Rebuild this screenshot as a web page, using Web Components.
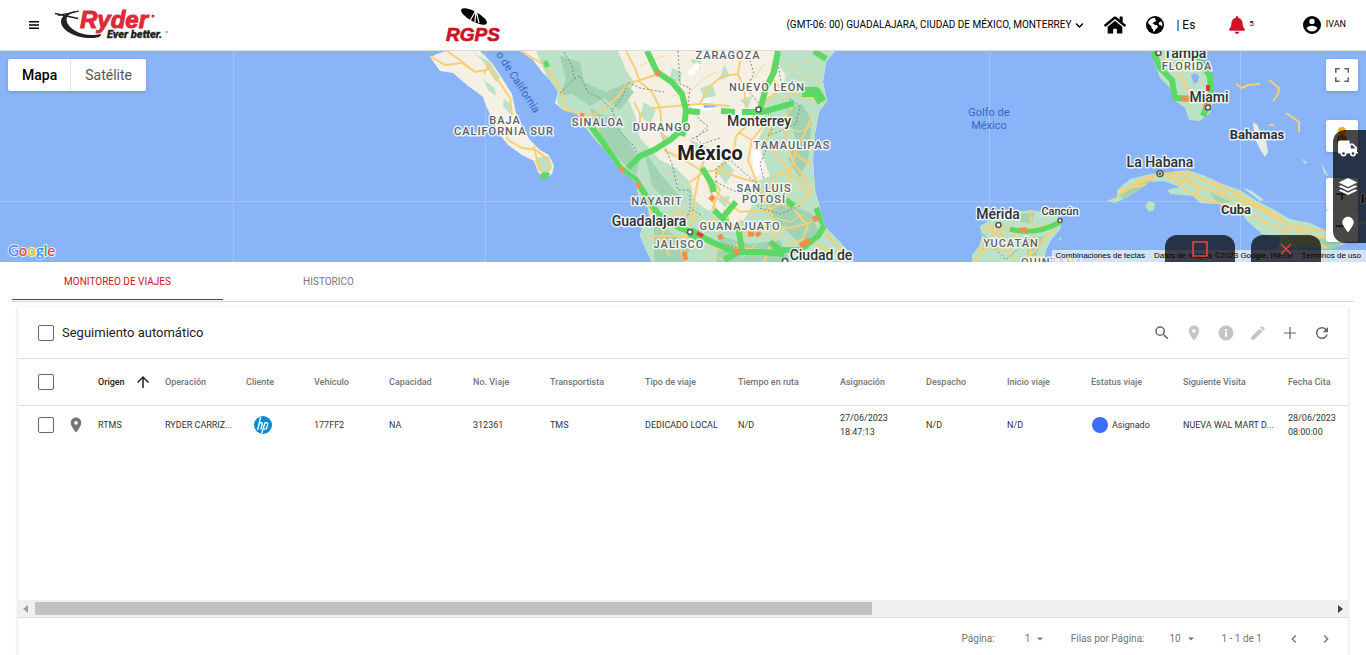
<!DOCTYPE html>
<html lang="es">
<head>
<meta charset="utf-8">
<meta name="viewport" content="width=device-width, initial-scale=1">
<title>RGPS - Monitoreo de viajes</title>
<style>
  html, body { margin: 0; height: 100%; }
  body { font-family: Roboto, "Liberation Sans", sans-serif; color: #222; background: #fff; }
</style>
</head>
<body>
<rgps-app></rgps-app>

<script>
const define = (name, html, setup) => {
  const tpl = document.createElement('template');
  tpl.innerHTML = html;
  customElements.define(name, class extends HTMLElement {
    constructor() {
      super();
      this.attachShadow({ mode: 'open' }).append(tpl.content.cloneNode(true));
    }
    connectedCallback() { if (setup) setup(this, this.shadowRoot); }
  });
};

/* ---------- icons ---------- */
const ICONS = {
  menu: ['0 0 20 16', '<path d="M0 0h20v3H0zM0 6.500h20v3H0zM0 13h20v3H0z"/>'],
  chevron: ['0 0 448 512', '<path d="M207 381 13 187c-10-10-10-25 0-34l22-22c10-10 25-10 34 0l155 154 155-154c9-10 24-10 34 0l22 22c10 9 10 24 0 34L241 381c-9 9-25 9-34 0z"/>'],
  home: ['0 0 576 512', '<path d="M280.4 148.3 96 300.1V464a16 16 0 0 0 16 16l112-.3a16 16 0 0 0 16-16V368a16 16 0 0 1 16-16h64a16 16 0 0 1 16 16v95.600a16 16 0 0 0 16 16.100l112 .3a16 16 0 0 0 16-16V300L295.700 148.300a12.200 12.200 0 0 0-15.300 0zM571.600 251.500 488 182.600V44a12 12 0 0 0-12-12h-56a12 12 0 0 0-12 12v72.600L318.500 43a48 48 0 0 0-61 0L4.300 251.500a12 12 0 0 0-1.600 16.900l25.500 31A12 12 0 0 0 45.200 301L280.400 107.300a12.200 12.200 0 0 1 15.300 0L530.900 301a12 12 0 0 0 16.900-1.600l25.500-31a12 12 0 0 0-1.700-16.900z"/>'],
  globe: ['0 0 20 20', '<circle cx="10" cy="10" r="10"/><path fill="#fff" d="M2.200 7.600C3.300 4.300 6 2.300 9.200 2l1.300 1-.4 1.300 1.600.3-1.200 1.500-1.900.5-.3 1.500-1.500.5 1.600.4 1.600 1 2.200.4 1.200 1.200-1.500 2.400-1.300 1-.9 2-1.400.6-.5-2.600-1.900-1.800.2-1.900-1.900-1.300zM14.300 3.500l2.600 2.700-2 .5-1 1.500.7 1.400 2.100.6 1 1.600.5-1.300-.1-2.300-1.100-2z"/>'],
  bell: ['0 0 448 512', '<path d="M224 512c35 0 64-29 64-64H160c0 35 29 64 64 64zm215-150c-19-21-55-52-55-154 0-78-54-140-128-155V32a32 32 0 1 0-64 0v21C118 68 64 130 64 208c0 102-36 133-55 154-6 6-9 14-9 22 0 16 13 32 32 32h384c19 0 32-16 32-32 0-8-3-16-9-22z"/>'],
  user: ['2 2 20 20', '<path d="M12 2a10 10 0 1 0 0 20 10 10 0 0 0 0-20zm0 3a3 3 0 1 1 0 6 3 3 0 0 1 0-6zm0 14.200a7.200 7.200 0 0 1-6-3.220c.03-1.990 4-3.080 6-3.080s5.970 1.090 6 3.080a7.200 7.200 0 0 1-6 3.220z"/>'],
  pin: ['0 0 24 24', '<path d="M12 2C8.130 2 5 5.130 5 9c0 5.250 7 13 7 13s7-7.750 7-13c0-3.870-3.130-7-7-7zm0 9.500a2.500 2.500 0 1 1 0-5 2.500 2.500 0 0 1 0 5z"/>'],
  drop: ['0 0 24 24', '<path d="M12 1C7.600 1 4 4.500 4 8.900 4 14 12 23 12 23s8-9 8-14.100C20 4.500 16.400 1 12 1z"/>'],
  search: ['0 0 24 24', '<path d="M15.500 14h-.79l-.28-.27A6.470 6.470 0 0 0 16 9.500 6.500 6.500 0 1 0 9.500 16c1.610 0 3.090-.59 4.230-1.570l.27.28v.79l5 4.990L20.490 19l-4.990-5zm-6 0a4.500 4.500 0 1 1 0-9 4.500 4.500 0 0 1 0 9z"/>'],
  info: ['0 0 24 24', '<path d="M12 2a10 10 0 1 0 0 20 10 10 0 0 0 0-20zm1.500 15h-3v-6h3zm0-7.500h-3v-3h3z"/>'],
  edit: ['0 0 24 24', '<path d="M3 17.250V21h3.750L17.810 9.940l-3.750-3.750zM20.710 7.040a1 1 0 0 0 0-1.410l-2.340-2.340a1 1 0 0 0-1.410 0l-1.830 1.830 3.750 3.750z"/>'],
  add: ['0 0 24 24', '<path d="M20 12.800h-7.200V20h-1.600v-7.200H4v-1.600h7.200V4h1.600v7.200H20z"/>'],
  refresh: ['0 0 24 24', '<path d="M17.650 6.350A8 8 0 1 0 19.730 14h-2.080A6 6 0 1 1 12 6c1.660 0 3.140.69 4.220 1.780L13 11h7V4z"/>'],
  arrow: ['0 0 24 24', '<path d="m4 12 1.410 1.410L11 7.830V20h2V7.830l5.580 5.590L20 12l-8-8z"/>'],
  caret: ['0 0 10 5', '<path d="M0 0h10L5 5z"/>'],
  left: ['0 0 24 24', '<path d="M15.410 7.410 14 6l-6 6 6 6 1.410-1.410L10.830 12z"/>'],
  right: ['0 0 24 24', '<path d="M10 6 8.590 7.410 13.170 12l-4.580 4.590L10 18l6-6z"/>'],
  truck: ['0 0 20 16', '<path d="M0 2c0-1 .7-2 2-2h9.500v3H15l4 4v4.500h1V13h-2a3 3 0 0 1-6 0H8.500a3 3 0 0 1-6 0H1.300C.4 13 0 12.500 0 12zM12.800 4.500V8h4.700L14.300 4.500z" fill-rule="evenodd"/><circle cx="5.500" cy="13" r="1.300" fill="#333"/><circle cx="15" cy="13" r="1.300" fill="#333"/>'],
  layers: ['0 0 20 18', '<path d="m10 0 10 4.700-10 4.700L0 4.700zM2.500 7.700 10 11.200l7.500-3.500L20 9l-10 4.700L0 9zM2.500 12 10 15.500l7.500-3.500 2.500 1.300L10 18 0 13.300z"/>'],
  full: ['0 0 18 18', '<path d="M0 0h6v2H2v4H0zM12 0h6v6h-2V2h-4zM0 12h2v4h4v2H0zM16 12h2v6h-6v-2h4z"/>'],
  square: ['0 0 16 16', '<path d="M1 1h14v14H1z" fill="none" stroke="currentColor" stroke-width="1.600"/>'],
  cross: ['0 0 12 12', '<path d="m1 1 10 10M11 1 1 11" fill="none" stroke="currentColor" stroke-width="1.300"/>'],
  plus: ['0 0 12 12', '<path d="M0 5h12v2H0zM5 0h2v12H5z"/>'],
  minus: ['0 0 12 12', '<path d="M0 5h12v2H0z"/>'],
  pegman: ['0 0 12 18', '<circle cx="6" cy="4" r="4" fill="#f9ab00"/><path d="M1 18V11c0-2 2-3 5-3s5 1 5 3v7z" fill="#c77f10"/>'],
  hp: ['0 0 20 20', '<circle cx="10" cy="10" r="10" fill="#0a8ad0"/><path d="M7.400 1 4.300 14M3.900 15.500 6 8.200M6.600 7.500h1.500q1.400 0 1 1.500L7.500 15M12.300 7l-3.700 12.500M12.200 7.500h2q1.500 0 1.100 1.500l-1.200 4.500q-.3 1-1.500 1h-1.500" fill="none" stroke="#fff" stroke-width="1.500"/>']
};
customElements.define('ui-icon', class extends HTMLElement {
  connectedCallback() {
    if (this.shadowRoot) return;
    const [box, body] = ICONS[this.getAttribute('name')];
    this.attachShadow({ mode: 'open' }).innerHTML =
      `<style>:host{display:inline-flex;flex:none;width:16px;height:16px}svg{width:100%;height:100%;fill:currentColor}</style>
       <svg viewBox="${box}" aria-hidden="true">${body}</svg>`;
  }
});

/* ---------- tick box ---------- */
customElements.define('ui-check', class extends HTMLElement {
  connectedCallback() {
    if (this.shadowRoot) return;
    this.attachShadow({ mode: 'open' }).innerHTML = `
      <style>
        :host { display: inline-flex; vertical-align: middle; }
        label { display: flex; align-items: center; gap: 8px; font-size: 13px; line-height: 16px; color: #222; }
        input { appearance: none; margin: 0; width: 16px; height: 16px; border: 1px solid #666; border-radius: 2px; background: #fff; }
        input:checked { background: #ce1126; border-color: #ce1126; }
      </style>
      <label><input type="checkbox" aria-label="${this.getAttribute('label')}"><slot></slot></label>`;
  }
});

/* ---------- header ---------- */
define('ryder-logo', `
  <style>:host{display:block;width:114px;height:42px}svg{display:block;width:100%;height:100%;overflow:visible}</style>
  <svg viewBox="0 -6 114 42" role="img" aria-label="Ryder Ever better">
    <path d="M4 5.500C9 4 17 3.500 25 1M1 3.500 24 8.500" stroke="#222" stroke-width="1.300" fill="none"/>
    <path d="M24 .5C12 2.500 7 6 7 12c0 6 9 13.500 22 15.500 8 1.200 15 .6 17.500-1.500l.8-2C38 26 27 25 20 20 12 14.500 10 7.500 16 4z" fill="#222"/>
    <text x="26" y="18" font-family="Liberation Sans, Arial, sans-serif" font-weight="700" font-style="italic" font-size="24" fill="#dd2a38" stroke="#dd2a38" stroke-width="1">Ryder</text>
    <circle cx="99" cy="6" r="1.500" fill="#dd2a38"/>
    <text x="53" y="28" font-family="Roboto, sans-serif" font-weight="900" font-style="italic" font-size="11" fill="#222" stroke="#222" stroke-width=".3">Ever better.</text>
    <path d="M111 22h3" stroke="#777"/>
  </svg>`);

define('rgps-logo', `
  <style>:host{display:block;width:60px;height:42px}svg{display:block;width:100%;height:100%;overflow:visible}</style>
  <svg viewBox="0 -4 60 42" role="img" aria-label="RGPS">
    <ellipse cx="29" cy="8.500" rx="14.500" ry="5" transform="rotate(29 29 8.500)" fill="#000"/>
    <path d="m31 2-6 11M31 2l-1 12M31 2l3 13" stroke="#fff" stroke-width="1.200"/>
    <text x="1" y="33" font-family="Liberation Sans, Arial, sans-serif" font-weight="700" font-style="italic" font-size="19" fill="#ce1126" stroke="#ce1126" stroke-width=".7">RGPS</text>
  </svg>`);

define('app-header', `
  <style>
    :host { display: grid; grid-template-columns: 445fr 921fr; align-items: center; height: 50px; border-bottom: 1px solid #dadce0; background: #fff; color: #000; }
    .left, .right { display: flex; align-items: center; }
    .left { padding-left: 29px; gap: 15px; }
    .right { padding-right: 20px; }
    button, .link { all: unset; display: flex; align-items: center; cursor: pointer; color: inherit; }
    .menu ui-icon { width: 10px; height: 8px; }
    .zone { display: flex; align-items: center; margin-left: auto; }
    select { appearance: none; border: 0; margin: 0; padding: 0 12px 0 0; background: none; font: 10px/16px Roboto, sans-serif; color: #000; }
    .zone ui-icon { width: 9px; height: 9px; margin-left: -9px; pointer-events: none; }
    .home { margin-left: 20px; }
    .home ui-icon { width: 22px; height: 20px; }
    .lang { margin-left: 20px; gap: 12px; font-size: 12px; line-height: 16px; }
    .lang ui-icon { width: 18px; height: 18px; }
    .bell { margin-left: 34px; gap: 4px; font-size: 8px; line-height: 16px; }
    .bell ui-icon { width: 16px; height: 18px; color: #ce1126; }
    .bell span, .user span { margin-bottom: 3px; }
    .user { margin-left: 49px; gap: 5px; font-size: 9px; line-height: 16px; }
    .user ui-icon { width: 18px; height: 18px; }
  </style>
  <div class="left">
    <button class="menu" aria-label="Menú"><ui-icon name="menu"></ui-icon></button>
    <ryder-logo></ryder-logo>
  </div>
  <div class="right">
    <rgps-logo></rgps-logo>
    <label class="zone"><select aria-label="Zona horaria"><option>(GMT-06: 00) GUADALAJARA, CIUDAD DE MÉXICO, MONTERREY</option></select><ui-icon name="chevron"></ui-icon></label>
    <a class="link home" href="#inicio" aria-label="Inicio"><ui-icon name="home"></ui-icon></a>
    <button class="lang"><ui-icon name="globe"></ui-icon><span>| Es</span></button>
    <button class="bell" aria-label="Notificaciones"><ui-icon name="bell"></ui-icon><span>5</span></button>
    <button class="user"><ui-icon name="user"></ui-icon><span>IVAN</span></button>
  </div>`);

/* ---------- map ---------- */
define('map-canvas', `
  <style>
    :host { display: block; height: 100%; }
    svg { display: block; width: 100%; height: 100%; }
    text { font-family: Roboto, sans-serif; text-anchor: middle; paint-order: stroke; stroke: #fff; stroke-opacity: .8; stroke-width: 3px; stroke-linejoin: round; }
    .state { font-size: 11px; font-weight: 500; letter-spacing: 1px; fill: #5f6368; }
    .city { font-size: 14px; font-weight: 500; fill: #303236; }
    .town { font-size: 11px; font-weight: 500; fill: #3c4043; }
    .bold { font-size: 13px; font-weight: 700; }
    .country { font-size: 20px; font-weight: 700; fill: #202124; }
    .sea { font-size: 11px; fill: #2f68cc; stroke: none; }
    .logo { font: 500 15px Lato, sans-serif; text-anchor: start; stroke-width: 2px; }
    .land { fill: #f5f0e4; }
    .green { fill: #bbe2c6; }
    .dark { fill: #a1d3b2; }
    .road path { fill: none; stroke: #f8cf74; stroke-width: 2; stroke-linejoin: round; }
    .road .minor { stroke: #f6d994; stroke-width: 1; }
    .border path { fill: none; stroke: #80868b; stroke-width: 1; stroke-dasharray: 2 2; }
    .jam path { fill: none; stroke: #5cd865; stroke-width: 6; stroke-linejoin: round; }
    .jam .wide { stroke-width: 10; }
    .slow path { fill: none; stroke: #ff8a4c; stroke-width: 5; }
    .dot circle { fill: #fff; stroke: #555; stroke-width: 1.500; }
  </style>
  <svg viewBox="0 51 1366 211" preserveAspectRatio="xMidYMid slice" role="img" aria-label="Mapa de México">
    <defs>
      <clipPath id="main"><path d="M520 51 533 60 542 72 550 80 558 92 555 103 563 110 577 114 583 124 593 137 607 153 620 171 636 182 638 194 648 208 650 220 642 226 640 236 646 250 652 262H854L850 253 838 240 825 227 820 208 815 190 813 160 815 133 819 112 827 101 823 82 826 62 835 51Z"/></clipPath>
      <clipPath id="cuba"><path d="M1107 201 1117 197 1117 190 1130 179 1150 174 1170 172 1187 170 1203 175 1220 183 1240 190 1257 201 1273 209 1290 219 1310 223 1327 231 1337 234 1347 243 1330 249 1297 247 1277 250 1281 238 1262 234 1247 221 1240 210 1217 204 1200 203 1193 196 1170 194 1167 190 1180 187 1163 181 1150 182 1140 189 1128 197 1115 203Z"/></clipPath>
    </defs>
    <rect y="51" width="1366" height="211" fill="#8ab4f8"/>
    <path d="M233.500 51V262M485.500 51V262M989.500 51V262M1240.500 51V262M0 201.500H1366" stroke="#a3c4fa"/>
    <!-- Baja California -->
    <path class="land" d="M430 57 437 54 446 51H480L492 63 500 75 512 94 516 113 522 127 530 140 540 150 549 155 554 166 552 174 545 179 538 172 534 161 522 155 508 145 497 131 492 118 487 108 483 97 474 90 468 86 453 73 440 71Z"/>
    <path class="green" d="M472 52 490 62 500 78 496 82 482 60ZM484 80 495 88 496 96 488 90ZM504 98 512 106 510 114 503 106ZM536 158 549 156 552 168 546 176 538 170Z"/>
    <g class="road"><path d="M430 56 445 65 462 63 475 72 490 69 500 83 510 98 512 114 504 128 508 140 522 148 536 150 546 158 551 166 543 176 536 160M447 51 460 60 475 72M534 146 539 170M490 62 484 74"/></g>
    <path fill="#5cd865" d="m540 175 4-3 6 1-2 5-6 2z"/>
    <!-- Mainland -->
    <g clip-path="url(#main)">
      <rect class="land" x="510" y="51" width="350" height="211"/>
      <path class="green" d="M536 51H618L626 70 634 82 628 98 636 118 640 138 660 160 676 168 690 182 694 200 704 208 720 214 730 226 744 220 752 206 746 192 756 182 770 176 764 160 758 140 766 124 760 100 780 92 786 76 776 60 780 51H860V262H640L636 180 560 108Z"/>
      <path class="dark" d="M560 56 580 62 584 82 606 92 624 84 634 92 620 110 604 98 590 106 572 94 560 96 566 80ZM590 108 612 120 628 140 640 160 636 176 616 156 600 138ZM644 150 662 176 680 196 670 204 652 186ZM786 110 802 104 812 120 808 160 800 178 788 160 796 140ZM760 190 776 196 792 206 812 214 820 236 806 250 788 232 770 216ZM654 222 676 236 690 250 682 262H654ZM720 236 750 244 780 240 790 262H716Z"/>
      <path class="green" d="M672 68 682 72 680 84 670 78ZM690 60 702 58 700 70ZM700 88 712 84 716 96 704 98ZM724 64 730 76 720 80ZM644 102 656 110 650 124 640 116ZM690 140 706 146 700 160ZM724 160 734 170 726 184 716 170ZM716 198 730 196 726 208ZM740 100 752 96 748 108ZM660 132 670 138 664 146Z"/>
      <path fill="#fff" d="m688 70 6-3 2 6-7 3zM696 62l5 3-3 6-5-4zM690 106l18-6 4 10-20 2zM752 150l8-3 2 26-8 4z"/>
      <path fill="#8ab4f8" d="m703 103 12 1 1 3-12 1zM562 118l6 4-2 2z"/>
      <g class="road">
        <path class="minor" d="M664 170 676 180 690 186 700 196M668 222 674 210 684 206M752 196 764 204 776 202 788 208M748 214 762 222 776 218 790 222 804 214M756 234 772 232 786 238M700 246 712 256 726 260M742 258 756 244M782 60 796 72 812 76 824 90M784 76 796 66 812 60M764 64 756 76 748 82M672 96 690 92 702 80 716 72M640 66 652 60 664 56M788 186 800 190 812 184M776 132 786 128 800 132 812 126M780 170 790 182 804 190 812 200M690 214 704 222 720 218M646 236 660 244 676 250M766 92 778 98 790 96"/>
        <path d="M521 51 536 60 545 65 556 82 563 96 564 109 580 114 594 132 612 150M582 116 596 114 610 104 618 96 628 84 640 80 658 74M626 51 634 66 640 82 652 92 660 108 662 130 664 144M652 108 700 104 730 106M634 102 640 114 640 130M700 104 708 88 722 76 738 74 740 60 732 51M738 74 744 88 746 108M776 51 770 76 780 88 800 96 826 102M758 110 772 96 784 86M758 110 748 124 736 136 734 150 724 162 716 176M738 132 752 140 768 120 780 124 792 108M752 140 748 160 756 180 764 196 770 210M772 120 766 144 780 158 790 172 812 190M812 118 804 134 796 150 790 170 774 176 766 196M788 140 800 158 812 164M790 118 784 140 794 164 808 182M664 150 684 160 704 172 720 170 740 178 756 182M704 160 698 180 694 202 690 228M690 182 704 172M706 176 712 196 716 214 710 230M716 192 730 204 740 212 760 210 772 214M724 210 732 226 750 232 770 226 790 228 812 222M700 166 720 190 712 210M700 218 680 212 668 222 660 240 670 256M688 232 680 246 684 262M690 232 672 226 660 228M704 240 720 250 742 248 760 250M740 220 744 236 734 250 724 262M770 210 778 230 770 246 764 262M790 172 786 196 796 212 808 226 802 240 788 244M812 190 800 204 780 204 764 212M820 220 828 236 846 254M808 240 826 250 850 258M800 248 812 262M640 188 648 204 654 222M602 140 594 120M652 236 690 236"/>
      </g>
      <g class="border">
        <path d="M564 52 572 66 574 78 580 76 588 92 600 98 612 110 622 98 628 82 640 88 664 92M612 110 620 132 634 146 640 160M560 93 576 78M678 51 680 84 690 88 688 104 700 120 708 126 696 138 702 144 720 138M708 130 690 140M664 145 672 164 678 190 690 190 690 208 702 216M750 60 754 74 746 88 764 110 776 122 768 136 796 124 800 106 788 98M776 51 782 88M716 182 716 168 730 160 748 176 760 186 762 208M716 182 732 190 748 196 760 208 780 214 800 206M766 150 760 164 764 180M700 240 724 244 744 250 780 250M690 210 684 224 700 244"/>
      </g>
      <g class="jam">
        <path d="M647 51 657 72 672 82 682 94 686 110 684 128 670 140 654 150 640 156 628 168M588 122 604 144 620 168 636 180 646 196 658 214 680 228 696 234 712 242 734 252 760 252 784 254M686 111 700 112M721 111 735 112M742 112 762 112 794 103M760 110 766 88 774 72 778 51M686 126 682 136M702 168 712 184 714 192M714 210 728 224M724 216 736 202M738 226 742 250 724 260M770 242 780 250 800 250 818 236 824 226 816 208M794 206 786 200M814 51 826 59"/>
        <path class="wide" d="M802 92 816 92 822 102M690 232 698 236"/>
      </g>
      <g class="slow"><path d="m656 72 3 3M637 183l3 4M620 169l4 2M710 200l4-4M734 250l5 3M748 234h6M756 236l4-4M800 246l10-6M718 238l5-2M684 252l2 8M580 115l4 1M814 216l3 5"/></g>
      <path d="m697 233 6 3" stroke="#e53935" stroke-width="4"/>
      <path d="m543 62 4-2 3 6-5 2z" fill="#5cd865"/>
    </g>
    <!-- Yucatán -->
    <path class="green" d="M972 262V255L979 246 982 237 980 226 993 218 1017 212 1030 210 1050 213 1062 219 1060 230 1051 240 1046 251 1044 262Z"/>
    <path class="dark" d="M1020 214 1034 212 1032 224 1020 222ZM984 234 992 244 982 252ZM1026 240 1044 236 1036 256 1028 256Z"/>
    <g class="road"><path d="M982 228 998 226 1010 228 1030 230 1060 222M998 226 990 240 978 252M998 226 1006 244 1016 262M1030 210 1032 232 1030 254M1060 222 1040 244 1024 262M1010 228 1024 248M974 262 988 246 1010 252M984 226 1000 236"/></g>
    <path d="M1010 229Q1036 236 1060 222" fill="none" stroke="#5cd865" stroke-width="5"/>
    <g class="slow"><path d="M1020 230h7"/></g>
    <g class="border"><path d="M982 234 1006 260 1030 238"/></g>
    <!-- Florida -->
    <path class="green" d="M1151 51H1197L1201 60 1213 77 1214 97 1210 113 1200 121 1189 120 1185 108 1174 100 1170 88 1160 78 1155 65Z"/>
    <path fill="#8ab4f8" d="m1191 76 4-3 4 3-1 6-4 2z"/>
    <g class="road"><path d="M1163 56 1182 78 1190 96 1206 96M1175 66 1192 64M1180 51 1184 70"/></g>
    <g class="jam"><path d="M1153 51 1160 68 1172 80 1175 98 1200 99M1196 51 1200 62 1210 76 1211 92 1208 104 1203 116"/></g>
    <g class="slow"><path d="M1182 99h7M1207 103l-2 5"/></g><path d="M1208 85v6" stroke="#e53935" stroke-width="4"/>
    <!-- Bahamas -->
    <g class="road"><path d="M1236 84 1242 88 1248 85 1260 84M1269 80 1279 88 1278 94 1273 101M1286 113 1292 117 1299 122 1299 132M1269 125H1274M1256 124 1260 136"/></g>
    <path fill="#e5eee0" d="m1253 122 5 4 3 10 5 4 2 12-3 5-5-8-5-10z"/>
    <path fill="#c9e2e0" d="m1302 158 5 5-2 1zM1321 163l8 14-5-4zM1242 187l10 4 12 9-4 1z"/>
    <!-- Cuba -->
    <g clip-path="url(#cuba)">
      <rect class="green" x="1100" y="168" width="260" height="90"/>
      <path class="dark" d="M1118 194 1150 180 1156 184 1126 202ZM1290 236 1340 240 1340 250 1290 246ZM1210 192 1232 202 1218 204Z"/>
      <g class="road"><path d="M1112 200 1130 188 1160 174 1190 182 1220 194 1250 204 1280 220 1310 236 1344 240M1118 196 1140 180 1160 174 1186 173 1206 180 1230 190 1256 204 1282 218M1172 178 1190 192 1206 200 1240 208 1260 220 1288 232M1180 174 1200 186 1196 194M1286 226 1306 228 1328 232 1344 244M1286 228 1292 244 1310 240 1328 248M1240 192 1246 208M1300 226 1296 240M1210 182 1232 200M1120 190 1150 184"/></g>
    </g>
    <path class="green" d="m1145 206 4-5 6 2-1 7-5 2zM1058 239l3-2v3zM1352 222l14-1v4z"/>
    <g class="dot"><circle cx="758.500" cy="109.500" r="2.500"/><circle cx="690" cy="232" r="2.500"/><circle cx="998.500" cy="225" r="2.500"/><circle cx="1060" cy="220.500" r="2"/><circle cx="1208" cy="107.500" r="2.500"/><circle cx="1158.500" cy="53" r="2.500"/><circle cx="1160" cy="173.500" r="3"/><circle cx="1160" cy="173.500" r=".8"/><circle cx="785" cy="261" r="2.500"/></g>
    <text class="sea" transform="translate(515 84) rotate(57)">o de California</text>
    <text class="sea" x="989" y="116">Golfo de</text><text class="sea" x="989" y="129">México</text>
    <text class="state" x="505" y="124">BAJA</text><text class="state" x="504" y="135">CALIFORNIA SUR</text>
    <text class="state" x="598" y="126">SINALOA</text><text class="state" x="662" y="131">DURANGO</text>
    <text class="state" x="728" y="59">ZARAGOZA</text><text class="state" x="767" y="91">NUEVO LEÓN</text>
    <text class="state" x="792" y="149">TAMAULIPAS</text><text class="state" x="764" y="192">SAN LUIS</text><text class="state" x="764" y="203">POTOSÍ</text>
    <text class="state" x="657" y="205">NAYARIT</text><text class="state" x="740" y="230">GUANAJUATO</text><text class="state" x="679" y="248">JALISCO</text>
    <text class="state" x="1187" y="70">FLORIDA</text><text class="state" x="1011" y="247">YUCATÁN</text><text class="state" x="1052" y="266">QUINTANA</text>
    <text class="city" x="1185" y="58">Tampa</text><text class="city" x="1209" y="102">Miami</text>
    <text class="city bold" x="1257" y="139">Bahamas</text><text class="city" x="1160" y="167">La Habana</text>
    <text class="city bold" x="1236" y="214">Cuba</text><text class="city" x="998" y="219">Mérida</text><text class="town" x="1060" y="215">Cancún</text>
    <text class="city" x="759" y="126">Monterrey</text><text class="city" x="649" y="226">Guadalajara</text><text class="city" x="821" y="260">Ciudad de</text>
    <text class="country" x="710" y="160">México</text><text class="city bold" x="1366" y="203">Is</text>
    <text class="logo" x="8" y="256"><tspan fill="#4285f4">G</tspan><tspan fill="#ea4335">o</tspan><tspan fill="#fbbc04">o</tspan><tspan fill="#4285f4">g</tspan><tspan fill="#34a853">l</tspan><tspan fill="#ea4335">e</tspan></text>
  </svg>`);

define('map-view', `
  <style>
    :host { display: block; position: relative; height: 211px; overflow: hidden; }
    button { all: unset; box-sizing: border-box; display: flex; align-items: center; justify-content: center; cursor: pointer; }
    .types { position: absolute; left: 8px; top: 8px; display: flex; background: #fff; border-radius: 2px; box-shadow: 0 1px 4px -1px rgba(0,0,0,.3); font-size: 14px; line-height: 32px; }
    .types button { padding: 0 14px; color: #565656; }
    .types button:first-child { padding-right: 13px; font-weight: 500; color: #000; border-right: 1px solid #e6e6e6; }
    .ctl { position: absolute; right: 8px; top: 8px; display: flex; flex-direction: column; color: #666; }
    .ctl button { width: 32px; height: 32px; background: #fff; border-radius: 2px; box-shadow: 0 1px 4px -1px rgba(0,0,0,.3); }
    .ctl .peg { margin-top: 29px; }
    .zoom { margin-top: 26px; }
    .ctl ui-icon { width: 14px; height: 14px; }
    .ctl .peg ui-icon { width: 12px; height: 24px; }
    .ctl .zoom ui-icon { width: 12px; height: 12px; }
    .side { position: absolute; right: 0; top: 79px; width: 33px; height: 113px; box-sizing: border-box; padding-right: 4px; border-radius: 12px 0 0 12px; background: rgba(0,0,0,.72); color: #fff; display: flex; flex-direction: column; justify-content: center; align-items: center; gap: 21px; }
    .side ui-icon { width: 20px; height: 17px; }
    .terms { position: absolute; right: 0; bottom: 0; display: flex; gap: 9px; padding: 0 5px 0 4px; background: rgba(245,245,245,.7); font: 8px/12px "Liberation Sans", sans-serif; color: #000; }
    .terms a { color: inherit; text-decoration: none; font: inherit; }
    .terms button { font: inherit; }
    .win { position: absolute; right: 45px; bottom: 0; display: flex; gap: 16px; }
    .win button { width: 70px; height: 27px; border-radius: 12px 12px 0 0; background: rgba(0,0,0,.72); color: #f44336; }
    .win ui-icon { width: 16px; height: 16px; }
    .win .x ui-icon { width: 12px; height: 12px; }
  </style>
  <map-canvas></map-canvas>
  <div class="types"><button>Mapa</button><button>Satélite</button></div>
  <div class="terms"><button>Combinaciones de teclas</button><span>Datos de mapas ©2023 Google, INEGI</span><a href="#terminos">Términos de uso</a></div>
  <div class="ctl">
    <button aria-label="Pantalla completa"><ui-icon name="full"></ui-icon></button>
    <button class="peg" aria-label="Street View"><ui-icon name="pegman"></ui-icon></button>
    <div class="zoom"><button aria-label="Acercar"><ui-icon name="plus"></ui-icon></button><button aria-label="Alejar"><ui-icon name="minus"></ui-icon></button></div>
  </div>
  <div class="side">
    <button aria-label="Unidades"><ui-icon name="truck"></ui-icon></button>
    <button aria-label="Capas"><ui-icon name="layers"></ui-icon></button>
    <button aria-label="Puntos"><ui-icon name="drop"></ui-icon></button>
  </div>
  <div class="win"><button aria-label="Maximizar"><ui-icon name="square"></ui-icon></button><button class="x" aria-label="Cerrar"><ui-icon name="cross"></ui-icon></button></div>`);

/* ---------- tabs ---------- */
define('tab-bar', `
  <style>
    :host { display: flex; margin: 0 12px; height: 39px; border-bottom: 1px solid #dadada; }
    button { all: unset; box-sizing: border-box; width: 211px; height: 38px; border-bottom: 1px solid transparent; text-align: center; font-size: 10px; line-height: 39px; color: #777; cursor: pointer; }
    button[aria-selected=true] { color: #ce1126; border-bottom-color: #ce1126; }
  </style>
  <button role="tab" aria-selected="true">MONITOREO DE VIAJES</button><button role="tab" aria-selected="false">HISTORICO</button>`);

/* ---------- trips ---------- */
const COLS = [
  ['Origen', 67, 'RTMS'], ['Operación', 81, 'RYDER CARRIZ...'], ['Cliente', 68, null], ['Vehículo', 75, '177FF2'],
  ['Capacidad', 84, 'NA'], ['No. Viaje', 77, '312361'], ['Transportista', 95, 'TMS'], ['Tipo de viaje', 93, 'DEDICADO LOCAL'],
  ['Tiempo en ruta', 102, 'N/D'], ['Asignación', 86, '27/06/2023<br>18:47:13'], ['Despacho', 81, 'N/D'], ['Inicio viaje', 84, 'N/D'],
  ['Estatus viaje', 92, '<span class="status"><i></i>Asignado</span>'], ['Siguiente Visita', 105, 'NUEVA WAL MART D...'], ['Fecha Cita', 60, '28/06/2023<br>08:00:00']
];
define('trips-table', `
  <style>
    :host { display: block; }
    table { width: 100%; table-layout: fixed; border-collapse: collapse; font-size: 9px; line-height: 14px; }
    th, td { padding: 0; text-align: left; white-space: nowrap; }
    th { height: 46px; font-weight: 500; color: #757575; border-bottom: 1px solid #e0e0e0; }
    th.sorted { color: #222; }
    th.sorted span { display: flex; align-items: center; gap: 9px; }
    th.sorted ui-icon { width: 18px; height: 18px; }
    td { height: 38px; color: #333; }
    .box { padding-left: 20px; }
    .pin { width: 18px; height: 18px; margin-left: -1px; color: #757575; vertical-align: middle; }
    .hp { width: 18px; height: 18px; margin-left: 8px; vertical-align: middle; }
    .status { display: flex; align-items: center; gap: 4px; }
    .status i { width: 16px; height: 16px; margin-left: 1px; border-radius: 50%; background: #3d6dff; }
  </style>
  <table>
    <colgroup><col style="width:50px"><col style="width:30px">${COLS.map(c => `<col style="width:${c[1]}px">`).join('')}</colgroup>
    <thead><tr><th class="box"><ui-check label="Seleccionar todo"></ui-check></th><th></th>${COLS.map((c, i) => i ? `<th>${c[0]}</th>` : `<th class="sorted"><span>${c[0]}<ui-icon name="arrow"></ui-icon></span></th>`).join('')}</tr></thead>
    <tbody><tr><td class="box"><ui-check label="Seleccionar viaje"></ui-check></td><td><ui-icon class="pin" name="pin"></ui-icon></td>${COLS.map(c => `<td>${c[2] || '<ui-icon class="hp" name="hp"></ui-icon>'}</td>`).join('')}</tr></tbody>
  </table>`);

define('scroll-track', `
  <style>
    :host { display: flex; align-items: center; height: 17px; background: #f0f0f0; border-bottom: 1px solid #dcdcdc; padding: 0 5px; gap: 7px; }
    i { border: 4px solid transparent; }
    .l { border-left: 0; border-right: 5px solid #a0a0a0; }
    .r { border-right: 0; border-left: 5px solid #404040; }
    .track { flex: 1; }
    .thumb { width: calc(65% - 5px); height: 13px; background: #c1c1c1; }
  </style>
  <i class="l"></i><div class="track"><div class="thumb"></div></div><i class="r"></i>`);

define('table-pager', `
  <style>
    :host { display: flex; align-items: center; justify-content: flex-end; height: 32px; padding: 5px 14px 0 0; font-size: 10px; line-height: 16px; color: #757575; }
    label { display: flex; align-items: center; }
    select { appearance: none; border: 0; margin: 0 0 0 28px; padding: 0 12px 0 2px; background: none; font: inherit; color: inherit; }
    label ui-icon { width: 6px; height: 4px; margin-left: -6px; pointer-events: none; }
    .rows { margin: 0 28px; }
    .rows select { margin-left: 23px; }
    button { all: unset; display: flex; cursor: pointer; }
    .prev { margin: 0 16px 0 24px; }
  </style>
  <label>Página:<select><option>1</option></select><ui-icon name="caret"></ui-icon></label>
  <label class="rows">Filas por Página:<select><option>10</option></select><ui-icon name="caret"></ui-icon></label>
  <span>1 - 1 de 1</span>
  <button class="prev" aria-label="Anterior"><ui-icon name="left"></ui-icon></button>
  <button aria-label="Siguiente"><ui-icon name="right"></ui-icon></button>`);

define('trips-panel', `
  <style>
    :host { display: flex; flex-direction: column; margin: 5px 18px 0; box-shadow: 0 1px 3px rgba(0,0,0,.2); background: #fff; }
    .bar { display: flex; align-items: center; justify-content: space-between; height: 51px; padding: 0 17px 0 20px; border-bottom: 1px solid #e0e0e0; }
    .tools { display: flex; gap: 14px; color: #666; }
    button { all: unset; display: flex; cursor: pointer; }
    button[disabled] { color: #c4c4c4; }
    .tools ui-icon { width: 18px; height: 18px; }
    .body { flex: 1; min-height: 90px; }
  </style>
  <div class="bar">
    <ui-check label="Seguimiento automático">Seguimiento automático</ui-check>
    <div class="tools">
      <button aria-label="Buscar"><ui-icon name="search"></ui-icon></button>
      <button aria-label="Ubicar" disabled><ui-icon name="pin"></ui-icon></button>
      <button aria-label="Detalle" disabled><ui-icon name="info"></ui-icon></button>
      <button aria-label="Editar" disabled><ui-icon name="edit"></ui-icon></button>
      <button aria-label="Agregar"><ui-icon name="add"></ui-icon></button>
      <button aria-label="Actualizar"><ui-icon name="refresh"></ui-icon></button>
    </div>
  </div>
  <div class="body"><trips-table></trips-table></div>
  <scroll-track></scroll-track>
  <table-pager></table-pager>`);

define('rgps-app', `
  <style>
    :host { display: flex; flex-direction: column; min-height: 100vh; overflow: hidden; }
    trips-panel { flex: 1; }
  </style>
  <app-header></app-header>
  <map-view></map-view>
  <tab-bar></tab-bar>
  <trips-panel></trips-panel>`);
</script>
</body>
</html>
